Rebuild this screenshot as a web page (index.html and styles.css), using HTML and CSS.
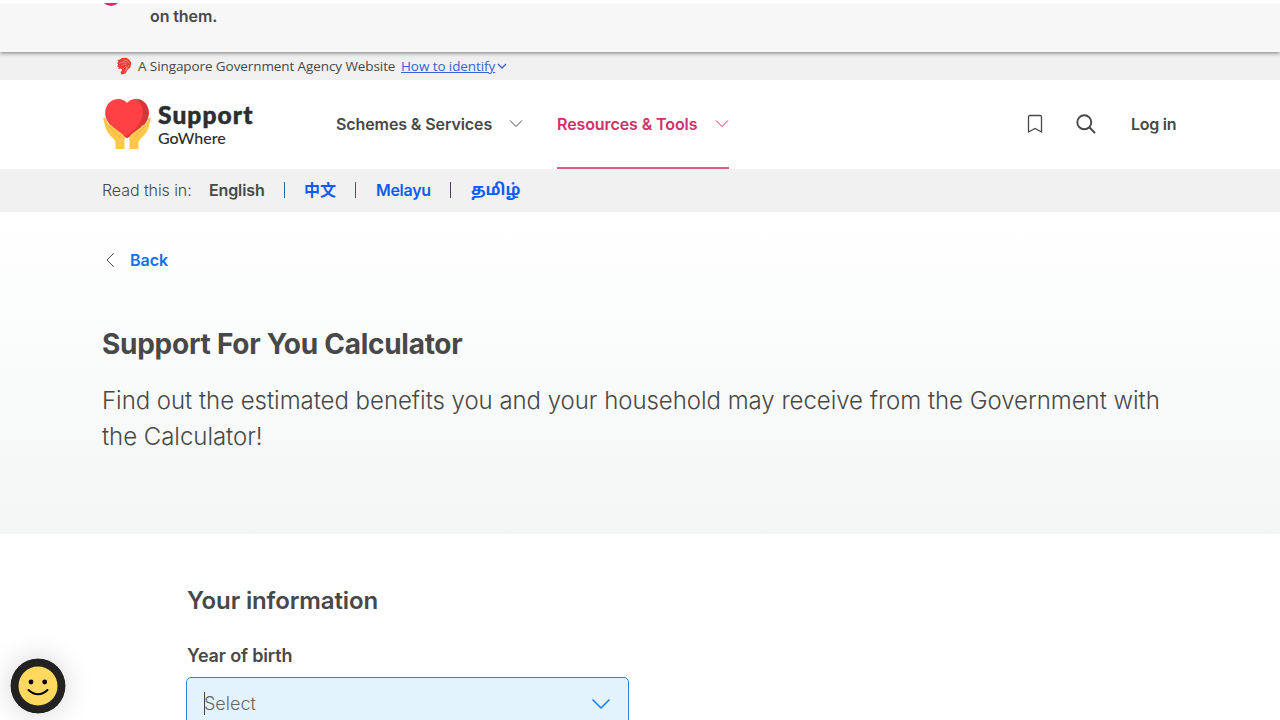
FILE: index.html
```html
<!DOCTYPE html>
<html lang="en">
<head>
<meta charset="utf-8">
<meta name="viewport" content="width=device-width, initial-scale=1">
<title>Support For You Calculator</title>
<link rel="stylesheet" href="styles.css">
</head>
<body>
<div class="notice"><span class="notice-dot"></span><p class="notice-text">on them.</p></div>
<div class="masthead">
  <svg class="lion" viewBox="0 0 16 18"><path fill="#f0372b" d="M1.500 3 4 2.500 6 1l4-.2 2.500 1.200 2.700 3.500-.7 4.500-3 3-2 3.500L5.500 17.500l-1-2.500 2-2L5 11.500l-3 .5 1-2-2-.500 1.200-2L1 6l1.500-1z"/><path fill="none" stroke="#f3aaa3" stroke-width=".6" d="M3 6.500 7 5l4 1M5 9l3-2 3 1M7 3l4 .5 2 3M7 12l3-3 1 2-3 5M10 14l2-4 1-2"/></svg>
  <span class="agency">A Singapore Government Agency Website</span>
  <a class="identify">How to identify</a>
  <svg class="tiny-chevron" viewBox="0 0 10 8"><path d="m1 2 4 4 4-4"/></svg>
</div>
<header class="header">
  <div class="logo">
    <svg class="logo-mark" viewBox="0 0 50 50">
      <path fill="#ffc84c" d="M1 19c2-1 3 0 3.500 2L7 26c3 0 5 2 7 5l5 5c2 2 3.500 3 3.500 6v8h-9v-6c0-3-2-4-5-7-4-4-5-8-6-12zM49 19c-2-1-3 0-3.500 2L43 26c-3 0-5 2-7 5l-5 5c-2 2-3.500 3-3.500 6v8h9v-6c0-3 2-4 5-7 4-4 5-8 6-12z"/>
      <path fill="#ff4044" d="M25 4C21-1 13-1 8 3c-6 5-6 14-2 20 4 7 11 12 19 16 8-4 15-9 19-16 4-6 4-15-2-20C37-1 29-1 25 4z"/>
      <path fill="#d9343a" d="M35 0c6 6 8 15 3 23-3 6-8 11-15 15l2 1c8-4 15-9 19-16 4-6 4-15-2-20-2-2-4-3-7-3z"/>
      <path fill="#ffc84c" d="M7 29c-1-4 2-4 4-1l8 6c4 3 4 5 3.500 8l-10-4zM43 29c1-4-2-4-4-1l-8 6c-4 3-4 5-3.500 8l10-4z"/>
      <path fill="none" stroke="#eeb440" d="m7 27 8 9 3 2M43 27l-8 9-3 2"/>
    </svg>
    <div class="logo-words"><span class="logo-top">Support</span><span class="logo-bottom">GoWhere</span></div>
  </div>
  <nav class="nav">
    <a class="nav-item"><span>Schemes &amp; Services</span><svg class="chevron" viewBox="0 0 14 9"><path d="m1 1.500 6 6 6-6"/></svg></a>
    <a class="nav-item active"><span>Resources &amp; Tools</span><svg class="chevron" viewBox="0 0 14 9"><path d="m1 1.500 6 6 6-6"/></svg></a>
  </nav>
  <div class="tools">
    <svg class="bookmark" viewBox="0 0 16 20"><path d="M1.500 18V3q0-1.500 1.500-1.500h10q1.500 0 1.500 1.500v15L8 14.500z"/></svg>
    <svg class="search" viewBox="0 0 20 20"><circle cx="8.300" cy="8.300" r="7"/><path d="m13.500 13.500 5.500 5.500"/></svg>
    <a class="login">Log in</a>
  </div>
</header>
<div class="languages">
  <span class="read">Read this in:</span>
  <span class="lang current">English</span><i class="bar blue"></i>
  <a class="lang chinese">中文</a><i class="bar green"></i>
  <a class="lang malay">Melayu</a><i class="bar purple"></i>
  <a class="lang tamil">தமிழ்</a>
</div>
<section class="hero">
  <a class="back"><svg class="back-arrow" viewBox="0 0 10 16"><path d="M8.500 1.500 2 8l6.500 6.500"/></svg><span>Back</span></a>
  <h1>Support For You Calculator</h1>
  <p class="intro">Find out the estimated benefits you and your household may receive from the Government with<br>the Calculator!</p>
</section>
<main class="form">
  <h2>Your information</h2>
  <label class="label">Year of birth</label>
  <div class="select"><i class="caret"></i><span class="placeholder">Select</span><svg class="select-chevron" viewBox="0 0 20 12"><path d="m1.500 1.500 8.500 8.500 8.500-8.500"/></svg></div>
</main>
<svg class="feedback" viewBox="0 0 56 56"><circle cx="28" cy="28" r="27.500" fill="#222"/><circle cx="28" cy="28" r="19.500" fill="#ffd95f"/><circle cx="21" cy="24" r="2.400"/><circle cx="34.700" cy="24" r="2.400"/><path d="M18.500 32q9.500 8.500 19 0" fill="none" stroke="#000" stroke-width="2" stroke-linecap="round"/></svg>
</body>
</html>
```
FILE: styles.css
```css
* { box-sizing: border-box; }
html, body { height: 720px; overflow: hidden; }
body { margin: 0; background: #fff; color: #484848; font-family: Inter, "Liberation Sans", sans-serif; font-size: 16px; }
svg { display: block; flex: none; }
a, span { white-space: nowrap; }
.notice { height: 52px; border-top: 3px solid #fff; background: #f7f7f7; padding-left: 101px; display: flex; overflow: hidden; position: relative; z-index: 1; box-shadow: 0 1px 4px rgba(0,0,0,.5); }
.notice-dot { width: 20px; height: 20px; border-radius: 50%; background: #e0246f; margin-top: -17px; margin-right: 29px; }
.notice-text { margin: 2px 0 0; font-weight: 600; line-height: 22px; letter-spacing: -.1px; }
.masthead { height: 28px; background: #f0f0f0; padding-left: 116px; display: flex; align-items: center; font: 13.500px/24px "Open Sans", sans-serif; letter-spacing: -.09px; }
.lion { width: 16px; height: 18px; margin-right: 6px; }
.agency { width: 263px; }
.identify { color: #3764d1; text-decoration: underline; width: 96px; }
.tiny-chevron { width: 10px; height: 8px; }
.tiny-chevron path { fill: none; stroke: #3764d1; stroke-width: 1.300; }
.header { height: 89px; padding-left: 102px; display: flex; }
.logo { width: 234px; display: flex; padding-top: 19px; }
.logo-mark { width: 50px; height: 50px; margin-right: 6px; }
.logo-words { display: flex; flex-direction: column; color: #2c2d30; font-family: Lato, sans-serif; }
.logo-top { font-size: 24.500px; font-weight: 900; line-height: 26px; margin-top: 3px; letter-spacing: 1.100px; -webkit-text-stroke: .5px #2c2d30; }
.logo-bottom { font-size: 16px; line-height: 18px; font-weight: 500; margin-top: 1px; }
.nav { display: flex; gap: 33px; }
.nav-item { height: 89px; display: flex; align-items: center; justify-content: space-between; font-weight: 600; width: 187px; letter-spacing: -.1px; padding-bottom: 2px; }
.nav-item.active { width: 172px; color: #cf326a; border-bottom: 2px solid #dc5b88; padding-bottom: 0; margin-left: 1px; }
.chevron { width: 14px; height: 9px; margin-top: -1px; }
.chevron path, .back-arrow path { fill: none; stroke: currentColor; stroke-width: 1; }
.tools { display: flex; align-items: center; margin-left: 298px; padding-bottom: 2px; }
.bookmark { width: 16px; height: 20px; margin-right: 33px; }
.search { width: 20px; height: 20px; margin-right: 35px; }
.bookmark path { fill: none; stroke: #484848; stroke-width: 1.300; }
.search * { fill: none; stroke: #484848; stroke-width: 1.900; }
.login { font-weight: 600; letter-spacing: -.25px; }
.languages { height: 43px; background: #f1f1f1; padding: 0 0 2px 102px; display: flex; align-items: center; }
.read { width: 107px; letter-spacing: -.08px; font-weight: 300; }
.lang { color: #105cf3; font-weight: 600; letter-spacing: -.3px; }
.lang.current { color: #484848; width: 75px; letter-spacing: -.12px; }
.bar { width: 1px; height: 16px; margin-right: 20px; }
.blue { background: #246a9c; margin-right: 19px; }
.green { background: #286c46; }
.purple { background: #58355f; }
.chinese { width: 51px; line-height: 22px; margin-top: -2px; letter-spacing: 0; font-family: "Noto Sans CJK SC", sans-serif; }
.malay { width: 74px; }
.tamil { margin-top: 3px; letter-spacing: 0; font-weight: 700; font-family: "Noto Sans Tamil", "Noto Sans", sans-serif; }
.hero { height: 322px; padding: 36px 102px 0; background: linear-gradient(#fff, #f4f6f6); }
.back { display: flex; height: 24px; align-items: center; color: #0f70ed; font-weight: 600; letter-spacing: 0; }
.back-arrow { width: 10px; height: 16px; margin-left: 3px; margin-right: 15px; color: #484848; }
h1 { font-size: 28px; line-height: 36px; margin: 54px 0 0; font-weight: 700; letter-spacing: -.27px; }
.intro { font-size: 24px; line-height: 36px; margin: 21px 0 0; font-weight: 300; letter-spacing: -.04px; white-space: nowrap; }
.form { padding: 51px 0 0 187px; }
h2 { font-size: 24px; font-weight: 600; line-height: 32px; margin: 0; letter-spacing: -.14px; }
.label { display: block; margin-top: 26px; font-size: 18px; line-height: 26px; font-weight: 600; letter-spacing: -.15px; }
.select { width: 443px; height: 53px; margin: 8px 0 0 -1px; background: #e2f3fe; border: 1.500px solid #2d83f6; border-radius: 5px; display: flex; align-items: center; padding: 0 17px; }
.caret { width: 1px; height: 23px; background: #444; }
.placeholder { font-size: 18px; font-weight: 300; color: #666; letter-spacing: 0; margin-left: -1px; }
.select-chevron { width: 20px; height: 12px; margin-left: auto; }
.select-chevron path { fill: none; stroke: #147cff; stroke-width: 1.500; }
.feedback { position: fixed; left: 10px; top: 658px; width: 56px; height: 56px; border-radius: 50%; box-shadow: 0 0 28px rgba(0,0,0,.17); }
```
